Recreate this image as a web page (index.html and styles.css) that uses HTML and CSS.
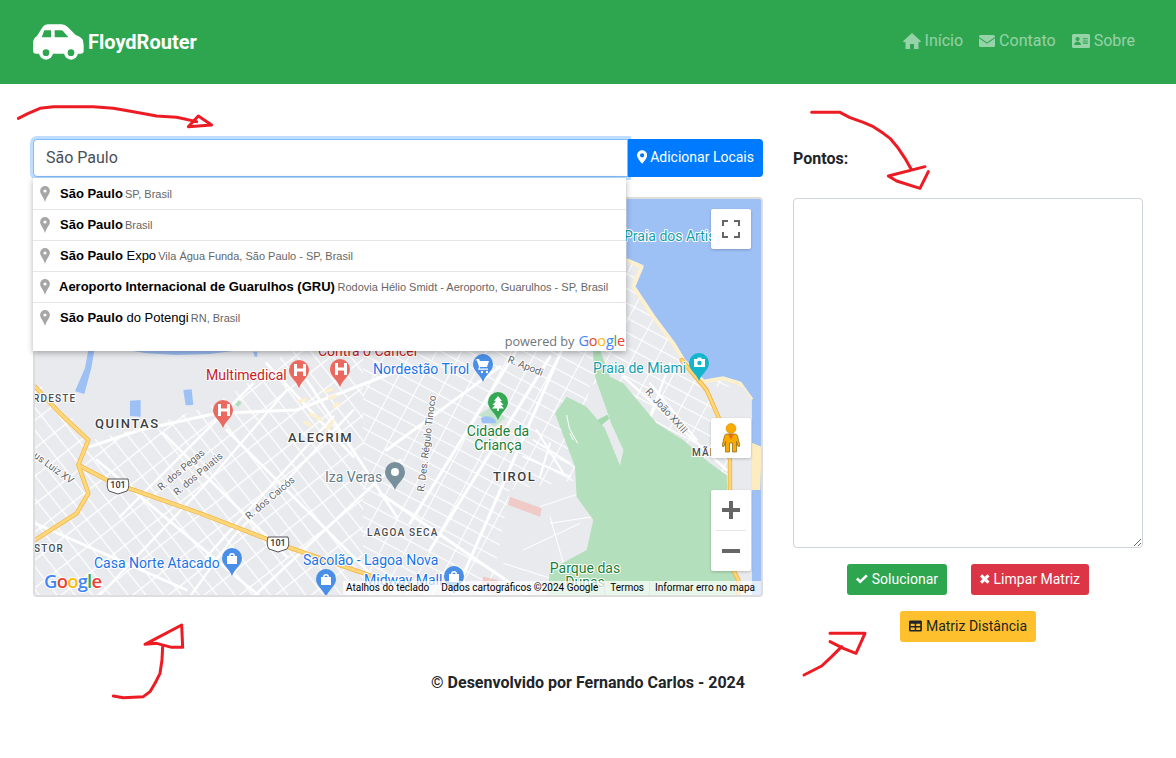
FILE: index.html
```html
<!DOCTYPE html>
<html lang="pt-BR">
<head>
    <meta charset="UTF-8">
    <meta name="viewport" content="width=device-width, initial-scale=1.0">
    <title>FloydRouter</title>
    <link rel="stylesheet" href="styles.css">
</head>
<body>
    <header class="navbar">
        <a class="brand" href="#">
            <svg class="brand-car" viewBox="98 68 153 108">
                <path fill="#fff" d="M98 124q1-14 12-20l17-27q5-8 15-8h42q10 0 18 8l24 24q24 6 24 30v18q0 8-9 8H108q-10 0-10-9z"/>
                <path fill="#2ea650" d="M132 87h20v21h-28zM163 87h20q3 0 5 2l16 19h-41z"/>
                <circle cx="137" cy="154" r="21" fill="#fff"/>
                <circle cx="137" cy="154" r="10" fill="#2ea650"/>
                <circle cx="212" cy="154" r="21" fill="#fff"/>
                <circle cx="212" cy="154" r="10" fill="#2ea650"/>
            </svg>
            <span>FloydRouter</span>
        </a>
        <nav class="nav-links">
            <a href="#">
                <svg class="icon-home" viewBox="0 0 18 16"><path d="M9 0l9 8.200-1.200 1.400-1.300-1.100V16H11v-5H7v5H2.500V8.500L1.200 9.600 0 8.200z"/></svg>
                Início
            </a>
            <a href="#">
                <svg class="icon-mail" viewBox="0 0 16 12"><path d="M0 1.500A1.500 1.500 0 0 1 1.500 0h13A1.500 1.500 0 0 1 16 1.500v.4L8 7.500 0 1.900z"/><path d="M0 3.200L8 8.800l8-5.600v7.300a1.500 1.500 0 0 1-1.500 1.500h-13A1.500 1.500 0 0 1 0 10.500z"/></svg>
                Contato
            </a>
            <a href="#">
                <svg class="icon-card" viewBox="0 0 18 14"><path fill-rule="evenodd" d="M1.500 0h15A1.500 1.500 0 0 1 18 1.500v11a1.500 1.500 0 0 1-1.500 1.500h-15A1.500 1.500 0 0 1 0 12.500v-11A1.500 1.500 0 0 1 1.500 0zM5.600 3a2.100 2.100 0 1 0 0 4.200 2.100 2.100 0 0 0 0-4.200zM2.200 11h6.800c0-2-1.400-3.200-3.400-3.200S2.200 9 2.200 11zM10.800 4.200v1.100h5V4.200zM10.800 6.400v1.100h5V6.400zM10.800 8.600v1.100h5V8.600z"/></svg>
                Sobre
            </a>
        </nav>
    </header>

    <main class="content">
        <section class="left-col">
            <div class="search-group">
                <input class="search-input" type="text" value="São Paulo">
                <button class="btn btn-blue btn-add" type="button">
                    <svg class="btn-icon icon-pin" viewBox="0 0 12 16"><path fill-rule="evenodd" d="M6 0a6 6 0 0 1 6 6c0 3-4 7.500-6 10C4 13.500 0 9 0 6a6 6 0 0 1 6-6zm0 3.500a2.500 2.500 0 1 0 0 5 2.500 2.500 0 0 0 0-5z"/></svg>
                    Adicionar Locais
                </button>
                <ul class="suggestions">
                    <li class="sug-item"><svg class="sug-pin" viewBox="0 0 12 18"><use href="#sugPin"/></svg><span><b>São Paulo</b> <small>SP, Brasil</small></span></li>
                    <li class="sug-item"><svg class="sug-pin" viewBox="0 0 12 18"><use href="#sugPin"/></svg><span><b>São Paulo</b> <small>Brasil</small></span></li>
                    <li class="sug-item"><svg class="sug-pin" viewBox="0 0 12 18"><use href="#sugPin"/></svg><span><b>São Paulo</b> Expo <small>Vila Água Funda, São Paulo - SP, Brasil</small></span></li>
                    <li class="sug-item sug-long"><svg class="sug-pin" viewBox="0 0 12 18"><use href="#sugPin"/></svg><span><b>Aeroporto Internacional de Guarulhos (GRU)</b> <small>Rodovia Hélio Smidt - Aeroporto, Guarulhos - SP, Brasil</small></span></li>
                    <li class="sug-item"><svg class="sug-pin" viewBox="0 0 12 18"><use href="#sugPin"/></svg><span><b>São Paulo</b> do Potengi <small>RN, Brasil</small></span></li>
                    <li class="sug-footer">powered by <span class="g-logo"><i class="g-blue">G</i><i class="g-red">o</i><i class="g-yellow">o</i><i class="g-blue">g</i><i class="g-green">l</i><i class="g-red">e</i></span></li>
                </ul>
            </div>

            <div class="map">
                <svg class="map-art" viewBox="33 197 730 400">
                    <defs>
                        <pattern id="streetsA" width="14" height="22" patternUnits="userSpaceOnUse" patternTransform="rotate(-38)">
                            <path d="M0 0H14M0 0V22" stroke="#fff" stroke-width="2.4" fill="none"/>
                        </pattern>
                        <pattern id="streetsB" width="13" height="22" patternUnits="userSpaceOnUse" patternTransform="rotate(-62)">
                            <path d="M0 0H13M0 0V22" stroke="#fff" stroke-width="2.2" fill="none"/>
                        </pattern>
                        <path id="pin" d="M10 0a10 10 0 0 1 10 10c0 7-7 10-10 18C7 20 0 17 0 10A10 10 0 0 1 10 0z"/>
                        <path id="sugPin" fill-rule="evenodd" d="M6 0a5.500 5.500 0 0 1 5.500 5.500C11.500 9 7.500 12 6 18 4.500 12 .5 9 .5 5.500A5.500 5.500 0 0 1 6 0zm0 3.800a1.800 1.800 0 1 0 0 3.600 1.800 1.800 0 0 0 0-3.600z"/>
                    </defs>

                    <rect x="33" y="197" width="730" height="400" fill="#e8eaed"/>
                    <rect x="33" y="197" width="330" height="400" fill="url(#streetsA)"/>
                    <rect x="363" y="197" width="400" height="400" fill="url(#streetsB)"/>

                    <!-- coordinates below were read off 3x crops, so these groups scale back down -->
                    <g transform="translate(20 350) scale(.3333)">
                        <path fill="#e8eaed" d="M45 0H810L690 90 640 130 560 170 380 230 210 270 130 170 45 90z"/>
                        <path fill="#9dc0f5" d="M205 0h18l-8 50-22 82-28-8 30-70zM490 120l25-2 5 47-23 1zM330 152l32-2v50l-32-2zM320 0h340l-90 12-100 3-90-5zM700 5h12v15h-8z"/>
                        <path fill="#b4dfbd" d="M655 150l10 8-10 12-9-6z"/>
                        <g fill="none" stroke="#fff" stroke-linecap="round">
                            <path stroke-width="9" d="M210 290L360 240 590 190 830 180 1140 60"/>
                            <path stroke-width="8" d="M860 90L1130 500M740 40L1000 320M230 330L720 740M45 520L500 720M1140 330L700 740M620 240L1100 720M430 250L800 620"/>
                            <path stroke-width="7" d="M800 120L560 400 240 735M510 740L640 560 1000 180M700 100L300 500M940 200L560 620"/>
                        </g>
                        <g fill="none" stroke="#fdf0cf" stroke-width="10">
                            <path d="M835 155l25-8M915 125l25-8M925 145l25-8M870 190l35 20M850 215l25 12M940 170l20-10M920 240l20-30"/>
                        </g>
                        <g fill="none" stroke-linejoin="round" stroke-linecap="round">
                            <path stroke="#f3b33e" stroke-width="13" d="M45 110L120 190 205 270 175 345 205 430 170 490 45 570M175 345L270 395 540 490 800 590 1060 680"/>
                            <path stroke="#fdd77a" stroke-width="9" d="M45 110L120 190 205 270 175 345 205 430 170 490 45 570M175 345L270 395 540 490 800 590 1060 680"/>
                        </g>
                    </g>

                    <g transform="translate(390 350) scale(.3333)">
                        <path fill="#9dc0f5" d="M710-270L755-250 730-190 790-100 850-20 880 30 940 95 1000 85 1050 100 1085 150V750H1130V-480H710z"/>
                        <path fill="none" stroke="#fdf0cf" stroke-width="12" stroke-linejoin="round" d="M710-270L755-250 730-190 790-100 850-20 880 30 940 95 1000 85 1050 100 1085 150"/>
                        <path fill="#fdecc0" d="M1085 278l30 12-4 130h-26z"/>
                        <path fill="#e8eaed" d="M950 110l110 0 25 40V740H1020V350L985 200z"/>
                        <g fill="none" stroke="#fff" stroke-linecap="round">
                            <path stroke-width="7" d="M700 80L1010 360M780 100L920 270M840 40L780 200"/>
                        </g>
                        <path fill="#e8eaed" d="M360 420L560 390 620 510 590 600 640 735H300z"/>
                        <g fill="none" stroke="#fff" stroke-width="3">
                            <path d="M450 470L600 420M480 520L610 500M400 600L570 520M340 640L640 735M480 500L520 640"/>
                        </g>
                        <path fill="#b4dfbd" d="M610 0H630L660 80 700 100 800 220 880 270 960 340 1010 375 1015 480 1020 640 1040 690V750H470L480 660 590 600 610 510 560 440 555 350 525 270 495 190 530 140 590 170 645 235 690 345 700 300 665 225 625 110 610 60z"/>
                        <path fill="#e8eaed" d="M600 100L625 110 665 225 700 300 690 345 645 235 590 170z"/>
                        <path fill="#a7d9b1" d="M622 210l30-16 6 12-24 20z"/>
                        <path fill="none" stroke="#fff" stroke-width="3" d="M530 195l8 40 25 45M540 250l10 20"/>
                        <g fill="none" stroke="#fff" stroke-linecap="round">
                            <path stroke-width="9" d="M520-10L200 720M330 50L-10 300M480 20L120 600M-30 430L420 740M380 0L60 520"/>
                            <path stroke-width="6" d="M430 270L540 340M400 320L540 380M440 240L520 370M480 280L450 380"/>
                        </g>
                        <path fill="#f2bcb5" opacity=".7" d="M360 440l95 35-5 25-95-35zM280 680l45 10-10 40-45-10z"/>
                        <path fill="#b4dfbd" opacity=".7" d="M265 195l50-30 30 40-30 25z"/>
                        <path fill="#9dc0f5" d="M272 205q22-14 45 5v10h-40z"/>
                        <g fill="none" stroke-linejoin="round" stroke-linecap="round">
                            <path stroke="#f3b33e" stroke-width="13" d="M875 30L950 120 985 200 1020 330V640L1045 690V750"/>
                            <path stroke="#fdd77a" stroke-width="8" d="M875 30L950 120 985 200 1020 330V640L1045 690V750"/>
                        </g>
                    </g>

                    <g class="pins">
                        <use href="#pin" x="289" y="360" fill="#ea6a60"/>
                        <use href="#pin" x="330" y="359" fill="#ea6a60"/>
                        <use href="#pin" x="213" y="400" fill="#ea6a60"/>
                        <use href="#pin" x="222" y="548" fill="#4a8fe7"/>
                        <use href="#pin" x="316" y="569" fill="#4a8fe7"/>
                        <use href="#pin" x="444" y="566" fill="#4a8fe7"/>
                        <use href="#pin" x="473" y="354" fill="#4a8fe7"/>
                        <use href="#pin" x="488" y="392" fill="#34a853"/>
                        <use href="#pin" x="689" y="353" fill="#12b5cb"/>
                        <use href="#pin" x="385" y="462" fill="#78909c"/>
                    </g>
                    <g class="pin-glyphs" fill="#fff">
                        <path d="M294 364h3v4.500h6V364h3v12h-3v-4.500h-6v4.500h-3zM335 363h3v4.500h6V363h3v12h-3v-4.500h-6v4.500h-3zM218 404h3v4.500h6V404h3v12h-3v-4.500h-6v4.500h-3z"/>
                        <path d="M227 556h10v8h-10zM321 577h10v8h-10zM449 574h10v8h-10zM229 556a3 3 0 0 1 6 0h-1.400a1.600 1.600 0 0 0-3.200 0zM323 577a3 3 0 0 1 6 0h-1.400a1.600 1.600 0 0 0-3.200 0zM451 574a3 3 0 0 1 6 0h-1.400a1.600 1.600 0 0 0-3.200 0z"/>
                        <path d="M477 359h2l1 2h9l-2 6h-7l-.5 1.500h8.500v1.200h-10l1-3-2.200-6.500h-1.800z"/>
                        <circle cx="482" cy="372" r="1.200"/>
                        <circle cx="487" cy="372" r="1.200"/>
                        <path d="M498 396l4 5h-2l3.500 4h-2.500l3 3.500h-5v2.500h-2v-2.500h-5l3-3.500h-2.500l3.500-4h-2z"/>
                        <path d="M694 359h3l1-1.500h3l1 1.500h3v8h-11z"/>
                        <circle cx="395" cy="472" r="4"/>
                    </g>
                    <circle cx="699.500" cy="363" r="2.200" fill="#12b5cb"/>

                    <g class="shield">
                        <path d="M108 479h20q2 8-1 12l-9 3-9-3q-3-4-1-12z" fill="#fff" stroke="#555" stroke-width="1"/>
                        <path d="M268 537h20q2 8-1 12l-9 3-9-3q-3-4-1-12z" fill="#fff" stroke="#555" stroke-width="1"/>
                        <text x="118" y="488">101</text>
                        <text x="278" y="546">101</text>
                    </g>

                    <g class="lbl lbl-hood">
                        <text x="95" y="428">QUINTAS</text>
                        <text x="288" y="442">ALECRIM</text>
                        <text x="493" y="481">TIROL</text>
                    </g>
                    <g class="lbl lbl-small">
                        <text x="33" y="402">RDESTE</text>
                        <text x="34" y="552">STOR</text>
                        <text x="367" y="536">LAGOA SECA</text>
                        <text x="692" y="456">MÃE</text>
                    </g>
                    <g class="lbl lbl-road">
                        <text transform="translate(161 491) rotate(-40)">R. dos Pegas</text>
                        <text transform="translate(177 496) rotate(-40)">R. dos Paiatis</text>
                        <text transform="translate(249 520) rotate(-40)">R. dos Caicós</text>
                        <text transform="translate(424 492) rotate(-83)">R. Des. Régulo Tinoco</text>
                        <text transform="translate(645 392) rotate(48)">R. João XXIII</text>
                        <text transform="translate(507 362) rotate(22)">R. Apodi</text>
                        <text transform="translate(33 457) rotate(36)">us Luiz XV</text>
                    </g>
                    <g class="lbl lbl-poi">
                        <text class="c-red" x="206" y="380">Multimedical</text>
                        <text class="c-red" x="318" y="356">Contra o Câncer</text>
                        <text class="c-blue" x="373" y="374">Nordestão Tirol</text>
                        <text class="c-blue" x="94" y="568">Casa Norte Atacado</text>
                        <text class="c-blue" x="303" y="565">Sacolão - Lagoa Nova</text>
                        <text class="c-blue" x="364" y="585">Midway Mall</text>
                        <text class="c-teal" x="593" y="373">Praia de Miami</text>
                        <text class="c-teal" x="624" y="241">Praia dos Artistas</text>
                        <text class="c-green" x="498" y="436" text-anchor="middle">Cidade da</text>
                        <text class="c-green" x="498" y="450" text-anchor="middle">Criança</text>
                        <text class="c-green" x="585" y="573" text-anchor="middle">Parque das</text>
                        <text class="c-green" x="585" y="587" text-anchor="middle">Dunas</text>
                        <text class="c-grey" x="325" y="482">Iza Veras</text>
                    </g>
                    <text class="map-google" x="44" y="588"><tspan fill="#4285f4">G</tspan><tspan fill="#ea4335">o</tspan><tspan fill="#fbbc05">o</tspan><tspan fill="#4285f4">g</tspan><tspan fill="#34a853">l</tspan><tspan fill="#ea4335">e</tspan></text>
                </svg>

                <div class="map-btn map-fullscreen">
                    <svg viewBox="0 0 18 18"><path d="M0 6V0h6v2H2v4zM12 0h6v6h-2V2h-4zM0 12h2v4h4v2H0zM16 12h2v6h-6v-2h4z"/></svg>
                </div>
                <div class="map-btn map-pegman">
                    <svg viewBox="0 0 18 30"><circle cx="9" cy="5.500" r="5" fill="#f9ab00" stroke="#c98a00" stroke-width=".5"/><path fill="#f9ab00" stroke="#80621b" stroke-width=".7" d="M5 11h8q2 0 2.500 2L18 23l-2 .5-1.500-5V29h-4v-9h-3v9h-4V18.500L2 23.500 0 23l2.500-10Q3 11 5 11z"/><path fill="#e8710a" d="M6 11h6l-3 6z"/></svg>
                </div>
                <div class="map-zoom">
                    <button class="zoom-btn" type="button"><svg viewBox="0 0 18 18"><path d="M7 0h4v7h7v4h-7v7H7v-7H0V7h7z"/></svg></button>
                    <span class="zoom-sep"></span>
                    <button class="zoom-btn" type="button"><svg viewBox="0 0 18 18"><path d="M0 7h18v4H0z"/></svg></button>
                </div>
                <div class="map-attrib">
                    <span>Atalhos do teclado</span>
                    <span>Dados cartográficos ©2024 Google</span>
                    <span>Termos</span>
                    <span>Informar erro no mapa</span>
                </div>
            </div>
        </section>

        <section class="right-col">
            <label class="points-label" for="points">Pontos:</label>
            <textarea class="points-box" id="points"></textarea>
            <div class="btn-row">
                <button class="btn btn-green" type="button">
                    <svg class="btn-icon icon-check" viewBox="0 0 14 11"><path d="M5 11L0 6l2.200-2.200L5 6.600 11.800 0 14 2.200z"/></svg>
                    Solucionar
                </button>
                <button class="btn btn-red" type="button">
                    <svg class="btn-icon icon-times" viewBox="0 0 11 11"><path d="M2.500 0l3 3 3-3L11 2.500l-3 3 3 3L8.500 11l-3-3-3 3L0 8.500l3-3-3-3z"/></svg>
                    Limpar Matriz
                </button>
            </div>
            <div class="btn-row">
                <button class="btn btn-yellow" type="button">
                    <svg class="btn-icon icon-table" viewBox="0 0 14 12"><path fill-rule="evenodd" d="M1.500 0h11A1.500 1.500 0 0 1 14 1.500v9a1.500 1.500 0 0 1-1.500 1.500h-11A1.500 1.500 0 0 1 0 10.500v-9A1.500 1.500 0 0 1 1.500 0zM1.800 3.500v2.600h4.400V3.500zM7.800 3.500v2.600h4.400V3.500zM1.800 7.500v2.700h4.400V7.500zM7.800 7.500v2.700h4.400V7.500z"/></svg>
                    Matriz Distância
                </button>
            </div>
        </section>
    </main>

    <footer class="page-footer">© Desenvolvido por Fernando Carlos - 2024</footer>

    <!-- setas desenhadas a mao por cima da tela -->
    <svg class="arrows" viewBox="0 0 1176 758">
        <g transform="scale(.3333)">
            <path d="M55 355L85 340 120 325 160 320 280 320 340 325 400 335 470 348 530 352 590 365M595 348L635 375 565 380z"/>
        </g>
        <g transform="translate(780 95) scale(.3333)">
            <path d="M95 52H180L210 68 250 82 280 95 310 115 330 130 355 160 375 190 395 225M435 215L325 243 350 258 420 280 445 230"/>
        </g>
        <g transform="translate(100 610) scale(.3333)">
            <path d="M40 258L70 263 130 260 150 245 165 220 180 190 186 150 188 110M135 103L245 45 248 112 215 112 170 100z"/>
        </g>
        <g transform="translate(780 530) scale(.3333)">
            <path d="M72 435L125 408 155 380 185 350M150 310H255L228 370 190 355 150 335"/>
        </g>
    </svg>
</body>
</html>
```

FILE: styles.css
```css
* {
    box-sizing: border-box;
}
body {
    margin: 0;
    font-family: Roboto, "Liberation Sans", sans-serif;
    font-size: 16px;
    line-height: 1.5;
    color: #212529;
    background-color: #fff;
    position: relative;
    overflow: hidden;
    height: 758px;
}
a {
    color: inherit;
    text-decoration: none;
}

/* navbar */
.navbar {
    height: 84px;
    padding: 0 33px;
    background-color: #2ea650;
    display: flex;
    align-items: center;
    justify-content: space-between;
}
.brand {
    display: flex;
    align-items: center;
    gap: 4px;
    color: #fff;
    font-size: 20px;
    font-weight: 700;
}
.brand-car {
    width: 51px;
    height: 36px;
}
.nav-links {
    display: flex;
    padding-bottom: 2px;
}
.nav-links a {
    display: flex;
    align-items: center;
    gap: 4px;
    padding: 8px;
    color: rgba(255, 255, 255, 0.5);
}
.nav-links svg {
    fill: currentColor;
}
.icon-home {
    width: 18px;
    height: 16px;
}
.icon-mail {
    width: 16px;
    height: 12px;
}
.icon-card {
    width: 18px;
    height: 14px;
}

/* layout */
.content {
    display: flex;
    gap: 30px;
    padding: 55px 33px 0;
}
.left-col {
    width: 730px;
}
.right-col {
    width: 350px;
    padding-top: 8px;
}

/* busca */
.search-group {
    position: relative;
    display: flex;
    height: 38px;
    margin-bottom: 20px;
}
.search-input {
    flex: 1;
    min-width: 0;
    height: 38px;
    padding: 5px 12px 7px;
    border: 1px solid #80bdff;
    border-radius: 4px 0 0 4px;
    outline: none;
    box-shadow: 0 0 0 3px rgba(0, 123, 255, 0.25);
    font: 16px Roboto, sans-serif;
    color: #495057;
}
.btn {
    display: inline-flex;
    align-items: center;
    justify-content: center;
    gap: 4px;
    height: 31px;
    padding: 0 8px 2px;
    border: 1px solid transparent;
    border-radius: 3px;
    font: 14px Roboto, sans-serif;
    color: #fff;
    white-space: nowrap;
}
.btn svg {
    fill: currentColor;
}
.btn-blue {
    background-color: #007bff;
}
.btn-green {
    background-color: #2ea650;
    width: 100px;
}
.btn-red {
    background-color: #dc3545;
    width: 118px;
}
.btn-yellow {
    background-color: #ffc02e;
    color: #212529;
    width: 136px;
}
.btn-add {
    position: relative;
    width: 135px;
    height: 38px;
    border-radius: 0 4px 4px 0;
    gap: 3px;
}
.icon-pin {
    width: 12px;
    height: 16px;
}
.icon-check {
    width: 13px;
    height: 10px;
}
.icon-times {
    width: 10px;
    height: 10px;
}
.icon-table {
    width: 14px;
    height: 12px;
}

/* lista de sugestoes */
.suggestions {
    position: absolute;
    top: 39px;
    left: 0;
    z-index: 5;
    width: 593px;
    height: 173px;
    margin: 0;
    padding: 0;
    list-style: none;
    background-color: #fff;
    box-shadow: 0 2px 6px rgba(0, 0, 0, 0.3);
    font-family: "Liberation Sans", Arial, sans-serif;
}
.sug-item {
    height: 31px;
    padding-left: 6px;
    display: flex;
    align-items: center;
    border-top: 1px solid #e6e6e6;
    font-size: 13px;
    color: #000;
    white-space: pre;
}
.sug-item:first-child {
    border-top: 1px solid transparent;
}
.sug-item small {
    margin-left: -1.5px;
    font-size: 11px;
    color: #666;
}
.sug-long small {
    margin-left: -1px;
}
.sug-pin {
    width: 12px;
    height: 16px;
    margin-right: 9px;
    fill: #a6a6a6;
    flex: none;
}
.sug-long .sug-pin {
    margin-right: 8px;
}
.sug-footer {
    position: absolute;
    right: 1px;
    bottom: 1px;
    display: flex;
    gap: 4px;
    align-items: baseline;
    font: 12.7px "Open Sans", sans-serif;
    color: #70757a;
}
.g-logo {
    font-family: "Open Sans", sans-serif;
    font-size: 14.5px;
    font-weight: 500;
    letter-spacing: -0.2px;
}
.g-logo i {
    font-style: normal;
}
.g-blue {
    color: #4285f4;
}
.g-red {
    color: #ea4335;
}
.g-yellow {
    color: #fbbc05;
}
.g-green {
    color: #34a853;
}

/* mapa */
.map {
    position: relative;
    width: 730px;
    height: 400px;
    border: 2px solid #ddd;
    border-radius: 4px;
    overflow: hidden;
}
.map-art {
    position: absolute;
    top: -2px;
    left: -2px;
    width: 730px;
    height: 400px;
}
.lbl text {
    font-family: Roboto, sans-serif;
    paint-order: stroke;
    stroke: #fff;
    stroke-width: 2px;
    stroke-linejoin: round;
}
.lbl-hood text {
    font-size: 13px;
    font-weight: 500;
    letter-spacing: 1.5px;
    fill: #3c4043;
}
.lbl-small text {
    font-size: 10px;
    font-weight: 500;
    letter-spacing: 1.2px;
    fill: #4a4d50;
}
.lbl-road text {
    font-size: 10px;
    fill: #5f6368;
}
.lbl-poi text {
    font-size: 14px;
}
.c-red {
    fill: #c5221f;
}
.c-blue {
    fill: #1a73e8;
}
.c-teal {
    fill: #129eaf;
}
.c-green {
    fill: #188038;
}
.c-grey {
    fill: #607d8b;
}
.shield text {
    font: 500 9px Roboto, sans-serif;
    fill: #333;
    text-anchor: middle;
}
.map-google {
    font: 600 18.5px "Open Sans", sans-serif;
    letter-spacing: -0.8px;
    paint-order: stroke;
    stroke: #fff;
    stroke-width: 2px;
}
.map-btn {
    position: absolute;
    right: 10px;
    width: 40px;
    height: 40px;
    display: flex;
    align-items: center;
    justify-content: center;
    background-color: #fff;
    box-shadow: 0 1px 3px rgba(0, 0, 0, 0.2);
    border-radius: 2px;
}
.map-fullscreen {
    top: 10px;
}
.map-fullscreen svg {
    width: 18px;
    height: 18px;
    fill: #666;
}
.map-pegman {
    top: 219px;
}
.map-pegman svg {
    width: 18px;
    height: 30px;
}
.map-zoom {
    position: absolute;
    top: 291px;
    right: 10px;
    width: 40px;
    height: 81px;
    display: flex;
    flex-direction: column;
    align-items: center;
    background-color: #fff;
    box-shadow: 0 1px 3px rgba(0, 0, 0, 0.2);
    border-radius: 2px;
}
.zoom-btn {
    width: 40px;
    height: 40px;
    padding: 0;
    border: none;
    background: none;
    display: flex;
    align-items: center;
    justify-content: center;
}
.zoom-btn svg {
    width: 18px;
    height: 18px;
    fill: #666;
}
.zoom-sep {
    width: 30px;
    height: 1px;
    background-color: #e6e6e6;
}
.map-attrib {
    position: absolute;
    right: 0;
    bottom: 0;
    width: 418px;
    height: 14px;
    display: flex;
    align-items: center;
    background-color: rgba(255, 255, 255, 0.7);
    font-size: 10px;
    line-height: 14px;
    color: #000;
    white-space: nowrap;
}
.map-attrib span {
    padding: 0 3px;
}
.map-attrib span:nth-child(1) {
    margin-right: 6px;
}
.map-attrib span:nth-child(3) {
    margin-left: 3px;
    border-left: 1px solid #e6e6e6;
    padding-left: 5px;
    padding-right: 5px;
}
.map-attrib span:nth-child(4) {
    border-left: 1px solid #e6e6e6;
    padding-left: 5px;
}

/* pontos */
.points-label {
    display: block;
    margin-bottom: 27px;
    font-weight: 700;
}
.points-box {
    display: block;
    width: 350px;
    height: 350px;
    border: 1px solid #ced4da;
    border-radius: 4px;
}
.btn-row {
    display: flex;
    justify-content: center;
    gap: 24px;
    margin-top: 16px;
}

/* rodape */
.page-footer {
    margin-top: 29px;
    text-align: center;
    font-weight: 700;
}

/* setas */
.arrows {
    position: absolute;
    top: 0;
    left: 0;
    width: 1176px;
    height: 758px;
    pointer-events: none;
}
.arrows path {
    fill: none;
    stroke: #ed1c24;
    stroke-width: 9;
    stroke-linejoin: round;
    stroke-linecap: round;
}
```
